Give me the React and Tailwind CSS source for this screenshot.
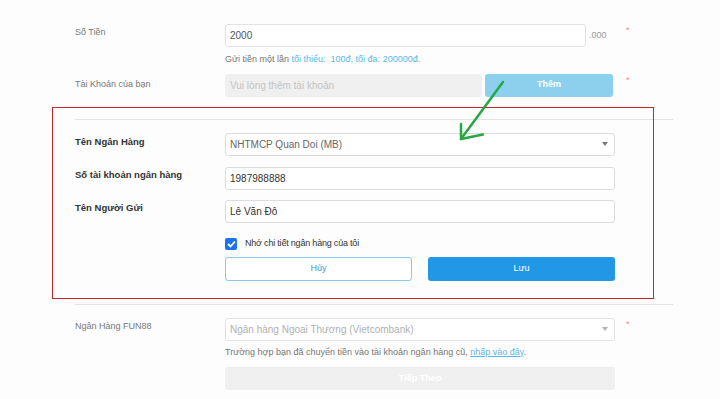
import React from 'react';

const Star = () => <span className="w-[13px] pl-[11px] text-[9px] leading-none text-[#f08a8a] pt-[2px]">*</span>;

const Caret = ({ light }) => (
  <svg width="6" height="4" viewBox="0 0 6 4" className="ml-auto">
    <path d="M0 0 L6 0 L3 4 Z" fill={light ? '#b5b5b5' : '#777'} />
  </svg>
);

const App = () => {
  return (
    <div className="w-[720px] h-[399px] bg-[#fdfdfd] relative overflow-hidden font-['Liberation_Sans',Arial,sans-serif] text-[10px]">
      {/* page content */}
      <div className="pl-[75px] w-[673px] pt-[24px] flex flex-col">
        {/* So tien */}
        <div className="flex">
          <div className="w-[150px] pt-[2px] text-[9px] text-[#777]">Số Tiền</div>
          <div className="w-[390px] flex flex-col">
            <div className="flex items-end">
              <div className="w-[361px] h-[23px] border border-[#e2e2e2] rounded-[3px] bg-white flex items-center px-[4px] text-[#555]">2000</div>
              <span className="ml-[3px] mb-[5px] text-[9px] text-[#999]">.000</span>
            </div>
            <div className="mt-[6px] text-[9px] text-[#777]">
              Gửi tiền một lần <span className="text-[#5bb8e8]">tối thiểu:&nbsp; 100đ, tối đa: 200000đ.</span>
            </div>
          </div>
          <Star />
        </div>

        {/* Tai khoan */}
        <div className="flex mt-[7px]">
          <div className="w-[150px] pt-[4px] text-[9px] text-[#777]">Tài Khoản của bạn</div>
          <div className="w-[390px] flex gap-[3px]">
            <div className="w-[257px] h-[23px] rounded-[3px] bg-[#f0f0f0] flex items-center px-[5px] text-[#c4c4c4]">Vui lòng thêm tài khoản</div>
            <div className="w-[128px] h-[23px] rounded-[3px] bg-[#8dd0ee] flex items-center justify-center text-white font-bold text-[9px]">Thêm</div>
          </div>
          <Star />
        </div>

        <div className="mt-[22px] h-px bg-[#e3e3e3]" />

        {/* Ten ngan hang */}
        <div className="flex mt-[13px]">
          <div className="w-[150px] pt-[2px] text-[9.5px] text-[#333] font-bold">Tên Ngân Hàng</div>
          <div className="w-[390px] h-[23px] border border-[#dcdcdc] rounded-[3px] bg-white flex items-center pl-[4px] pr-[6px] text-[#666]">
            NHTMCP Quan Doi (MB)
            <Caret />
          </div>
        </div>

        <div className="flex mt-[11px]">
          <div className="w-[150px] pt-[1px] text-[9.5px] text-[#333] font-bold">Số tài khoản ngân hàng</div>
          <div className="w-[390px] h-[23px] border border-[#dcdcdc] rounded-[3px] bg-white flex items-center px-[4px] text-[#333]">1987988888</div>
        </div>

        <div className="flex mt-[10px]">
          <div className="w-[150px] pt-[1px] text-[9.5px] text-[#333] font-bold">Tên Người Gửi</div>
          <div className="w-[390px] h-[23px] border border-[#dcdcdc] rounded-[3px] bg-white flex items-center px-[4px] text-[#333]">Lê Văn Đô</div>
        </div>

        <div className="flex mt-[15px]">
          <div className="w-[150px]" />
          <div className="w-[390px] flex flex-col">
            <div className="h-[12px] flex items-center gap-[8px] text-[9px] tracking-[-0.2px] text-[#333] leading-none">
              <div className="w-[12px] h-[12px] rounded-[2px] bg-[#1a73e8] flex items-center justify-center">
                <svg width="9" height="8" viewBox="0 0 9 8">
                  <path d="M1 4 L3.5 6.5 L8 1.5" stroke="white" strokeWidth="1.8" fill="none" />
                </svg>
              </div>
              Nhớ chi tiết ngân hàng của tôi
            </div>
            <div className="flex gap-[16px] mt-[7px]">
              <div className="w-[187px] h-[24px] rounded-[3px] border border-[#8cc8ee] bg-white flex items-center justify-center text-[#3a97d8] text-[9px]">Hủy</div>
              <div className="w-[187px] h-[24px] rounded-[3px] bg-[#2197e5] flex items-center justify-center text-white text-[9px]">Lưu</div>
            </div>
          </div>
        </div>

        <div className="mt-[23px] h-px bg-[#e3e3e3]" />

        {/* FUN88 */}
        <div className="flex mt-[13px]">
          <div className="w-[150px] pt-[2px] text-[9px] text-[#777]">Ngân Hàng FUN88</div>
          <div className="w-[390px] flex flex-col">
            <div className="h-[23px] border border-[#e2e2e2] rounded-[3px] bg-white flex items-center pl-[4px] pr-[6px] text-[#b0b0b0]">
              Ngân hàng Ngoai Thương (Vietcombank)
              <Caret light />
            </div>
            <div className="mt-[5px] text-[9px] text-[#777]">
              Trường hợp bạn đã chuyển tiền vào tài khoản ngân hàng cũ, <span className="text-[#5bb8e8] underline">nhấp vào đây</span>.
            </div>
            <div className="mt-[8px] h-[23px] rounded-[3px] bg-[#f0f0f0] flex items-center justify-center text-white font-bold text-[9px]">Tiếp Theo</div>
          </div>
          <Star />
        </div>
      </div>

      {/* annotation: red box */}
      <div className="absolute left-[52px] top-[107px] w-[602px] h-[192px] border border-[#c4262e]" />

      {/* annotation: green arrow */}
      <svg className="absolute left-0 top-0" width="720" height="399" viewBox="0 0 720 399">
        <g stroke="#28a745" strokeWidth="2.5" fill="none" strokeLinecap="round" strokeLinejoin="round">
          <path d="M503 82 L461 139" />
          <path d="M461 124 L461 139 L483 134.5" />
        </g>
      </svg>
    </div>
  );
};

export default App;
